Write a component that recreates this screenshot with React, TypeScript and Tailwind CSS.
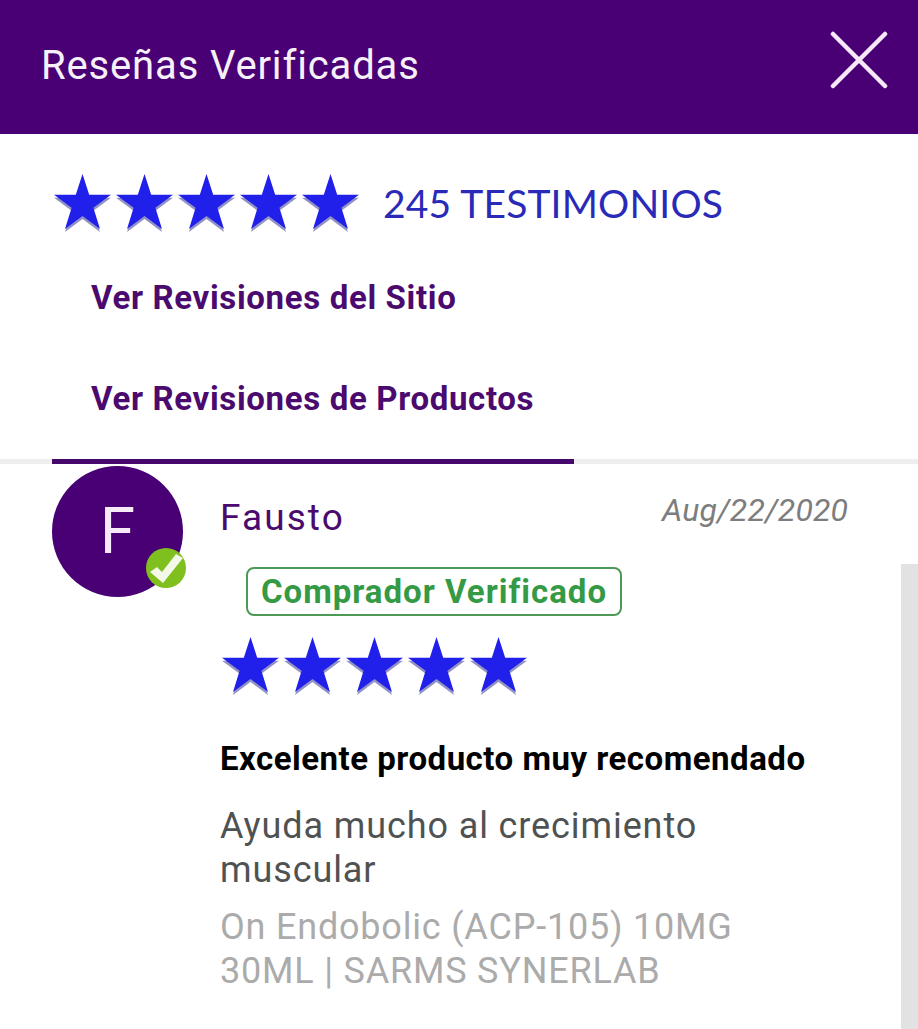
const STAR = "28.5,0 35.2,20.8 57,20.8 39.4,33.8 46,55 28.5,42 11,55 17.6,33.8 0,20.8 21.8,20.8";

function Stars() {
  return (
    <div className="flex gap-[5px]">
      {[0, 1, 2, 3, 4].map((i) => (
        <svg key={i} width="57" height="58" viewBox="0 0 57 58" className="block shrink-0">
          <polygon points={STAR} fill="#9292c4" transform="translate(0 3)" />
          <polygon points={STAR} fill="#2020ea" />
        </svg>
      ))}
    </div>
  );
}

export default function App() {
  return (
    <div className="relative h-[1029px] w-[918px] overflow-hidden bg-white font-['Roboto',sans-serif]">
      <header className="flex h-[134px] items-center justify-between bg-[#480074] pl-[42px] pr-[30px]">
        <h1 className="-translate-x-[1px] -translate-y-[1px] text-[40px] font-normal leading-none tracking-[0.85px] text-[#f6f0f8]">Reseñas Verificadas</h1>
        <svg width="58" height="58" viewBox="0 0 58 58" className="-translate-y-[7px]">
          <path d="M3 3 L55 55 M55 3 L3 55" stroke="#f6e8f6" strokeWidth="4.5" strokeLinecap="round" />
        </svg>
      </header>

      <section className="flex items-center gap-[24px] pl-[54px] pt-[40px]">
        <Stars />
        <span className="font-['Lato',sans-serif] text-[39px] leading-none tracking-[0.15px] text-[#2a2ab8]">245 TESTIMONIOS</span>
      </section>

      <nav className="flex flex-col pl-[91px] pt-[49px] text-[33px] font-bold leading-none tracking-[0.65px] text-[#4a0a6e]">
        <span>Ver Revisiones del Sitio</span>
        <span className="mt-[68px]">Ver Revisiones de Productos</span>
      </nav>

      <div className="mt-[44px] h-[5px] bg-[#eeeeee]">
        <div className="ml-[52px] h-[5px] w-[522px] bg-[#46096b]" />
      </div>

      <article className="flex pl-[52px] pr-[70px] pt-[2px]">
        <div className="relative h-[131px] w-[131px] shrink-0">
          <div className="flex h-full w-full items-center justify-center rounded-full bg-[#480074] text-[64px] leading-none text-[#f6eaf8]">
            F
          </div>
          <svg width="40" height="40" viewBox="0 0 40 40" className="absolute left-[94px] top-[82px]">
            <circle cx="20" cy="20" r="20" fill="#7fbf1e" />
            <path d="M4 24 L11 19 L16 24 L30 6 L37 10 L17 35 Z" fill="#f4f8e8" />
          </svg>
        </div>

        <div className="ml-[37px] min-w-0 flex-1">
          <div className="flex items-start justify-between pt-[33px]">
            <span className="text-[37px] leading-none tracking-[2.1px] text-[#4a0a6e]">Fausto</span>
            <span className="-mt-[5px] text-[32px] italic leading-none tracking-[0.1px] text-[#7d7d7d]">Aug/22/2020</span>
          </div>
          <div className="ml-[26px] mt-[31px] flex h-[49px] w-[376px] items-center justify-center rounded-[8px] border-2 border-[#4c9a55] text-[33px] font-bold tracking-[1px] text-[#359a45]">
            Comprador Verificado
          </div>
          <div className="ml-[2px] mt-[21px]">
            <Stars />
          </div>
          <h2 className="mt-[47px] text-[33px] font-bold leading-none tracking-[0.5px] text-black">Excelente producto muy recomendado</h2>
          <p className="mt-[29px] max-w-[530px] text-[36px] leading-[44px] tracking-[0.9px] text-[#4f5252]">Ayuda mucho al crecimiento muscular</p>
          <p className="mt-[13px] max-w-[530px] text-[36px] leading-[44px] tracking-[0.8px] text-[#ababab]">On Endobolic (ACP-105) 10MG 30ML | SARMS SYNERLAB</p>
        </div>
      </article>

      <div className="absolute bottom-0 right-0 top-[564px] w-[17px] bg-[#e2e2e2]" />
    </div>
  );
}
